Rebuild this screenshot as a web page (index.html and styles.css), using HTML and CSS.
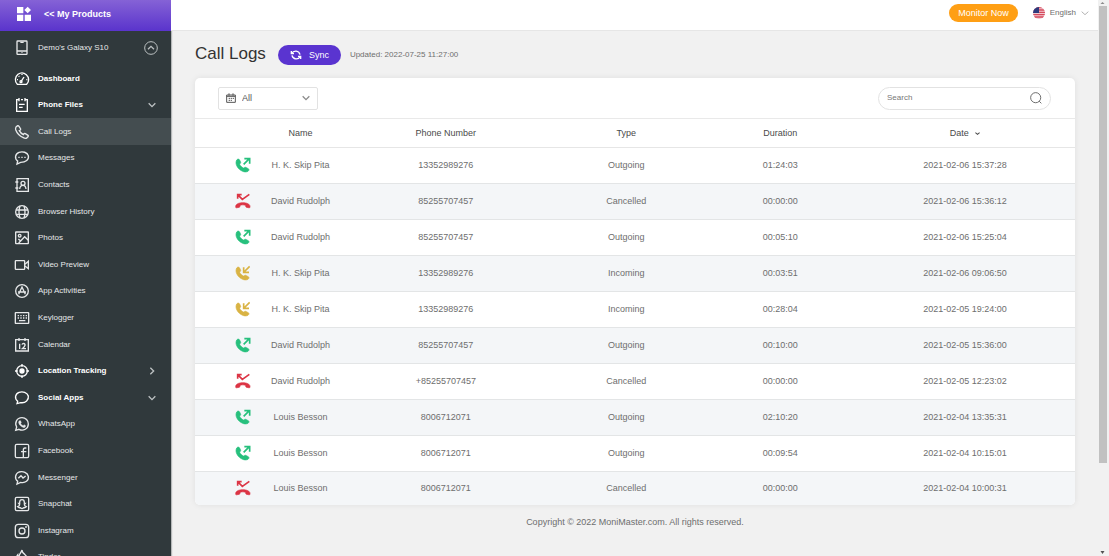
FILE: index.html
```html
<!DOCTYPE html>
<html lang="en">
<head>
<meta charset="utf-8">
<meta name="viewport" content="width=device-width, initial-scale=1">
<title>Call Logs</title>
<link rel="stylesheet" href="styles.css">
</head>
<body>
<svg class="sprite" aria-hidden="true">
  <defs>
    <path id="handset" d="M5 9C7 6 12 5 14 9L17 16C18 19 14 20 14 22C16 27 21 31 25 33C27 34 29 29 32 31L40 35C43 37 42 41 39 43C36 45 30 45 26 44C13 40 4 29 3 18C3 14 4 11 5 9Z"/>
    <symbol id="outgoing" viewBox="0 0 48 48"><use href="#handset" fill="currentColor" stroke="currentColor" stroke-width="2"/><path d="M26 22L43 5M28 5H44V20" fill="none" stroke="currentColor" stroke-width="5"/></symbol>
    <symbol id="incoming" viewBox="0 0 48 48"><use href="#handset" fill="currentColor" stroke="currentColor" stroke-width="2"/><path d="M44 4L27 21M26 7V22H42" fill="none" stroke="currentColor" stroke-width="5"/></symbol>
    <symbol id="cancelled" viewBox="0 0 48 48"><path d="M2 41C1 25 46 25 45 41C45 45 43 45 40 44L34 43C31 42 33 38 31 37C27 35 20 35 16 37C14 38 16 42 13 43L7 44C4 45 2 45 2 41Z" fill="currentColor" stroke="currentColor" stroke-width="2"/><path d="M8 5L22 19L43 4M8 17V5H20" fill="none" stroke="currentColor" stroke-width="5"/></symbol>
    <symbol id="chevron" viewBox="0 0 24 24"><path d="M2 7L12 17L22 7" fill="none" stroke="currentColor" stroke-width="4"/></symbol>
  </defs>
</svg>
<div class="app">
  <aside class="sidebar">
    <a class="brand" href="#">
      <svg class="icon brand-icon" viewBox="0 0 42 42"><path fill="#fff" d="M0 0H19V19H0ZM0 23H19V42H0ZM23 23H42V42H23ZM32 -1L42 9L32 19L22 9Z"/></svg>
      <span>&lt;&lt; My Products</span>
    </a>
    <button class="device" type="button">
      <svg class="icon" viewBox="0 0 42 42"><rect x="6" y="0" width="30" height="40" rx="2"/><path d="M6 30H36M16 4H26M21 34V36"/></svg>
      <span>Demo's Galaxy S10</span>
      <svg class="device-toggle" viewBox="0 0 42 42"><circle cx="21" cy="21" r="19"/><path d="M12 25L21 16L30 25" stroke-width="4"/></svg>
    </button>
    <nav>
      <ul class="menu">
        <li class="heading"><a href="#"><svg class="icon" viewBox="0 0 42 42"><path d="M7 37C-2 28 0 14 9 7C17 1 27 2 34 8C43 16 43 29 35 37ZM18 29L27 15M6 23H9M11 12L13 14M21 6V9M34 23H37"/><circle cx="18" cy="29" r="3"/></svg><span>Dashboard</span></a></li>
        <li class="heading"><a href="#"><svg class="icon" viewBox="0 0 42 42"><path d="M12 5H5V40H37V5H30M18 5H24M12 0V10M30 0V10M12 19H29M12 28H23"/></svg><span>Phone Files</span><svg class="arrow" viewBox="0 0 24 24"><use href="#chevron"/></svg></a></li>
        <li class="active"><a href="#"><svg class="icon" viewBox="0 0 42 42"><path d="M3 6L8 2Q10 1 12 4L17 12Q18 15 13 17Q17 25 25 29Q27 24 31 26L39 31Q41 33 39 35L36 38Q32 42 25 38Q8 30 2 14Q1 9 3 6Z"/></svg><span>Call Logs</span></a></li>
        <li><a href="#"><svg class="icon" viewBox="0 0 42 42"><path d="M6 39L8 30C-2 23 0 9 12 4C23 0 37 4 40 14C43 26 32 34 17 34Z"/><path d="M10 19H14M19 19H23M28 19H32" stroke-width="4"/></svg><span>Messages</span></a></li>
        <li><a href="#"><svg class="icon" viewBox="0 0 42 42"><path d="M6 2H40V40H6ZM1 12H10M1 30H10M14 33Q15 22 24 22Q32 22 33 33"/><circle cx="24" cy="16" r="6"/></svg><span>Contacts</span></a></li>
        <li><a href="#"><svg class="icon" viewBox="0 0 42 42"><circle cx="21" cy="21" r="19"/><path d="M3 15H39M3 28H39M15 3Q9 21 15 39M27 3Q33 21 27 39"/></svg><span>Browser History</span></a></li>
        <li><a href="#"><svg class="icon" viewBox="0 0 42 42"><rect x="2" y="3" width="38" height="35" rx="1"/><circle cx="14" cy="14" r="4"/><path d="M11 36L29 17L40 28M17 30L10 24"/></svg><span>Photos</span></a></li>
        <li><a href="#"><svg class="icon" viewBox="0 0 42 42"><rect x="1" y="8" width="28" height="26" rx="2"/><path d="M30 19L40 10V32L30 24"/></svg><span>Video Preview</span></a></li>
        <li><a href="#"><svg class="icon" viewBox="0 0 42 42"><circle cx="21" cy="21" r="19"/><path d="M11 31L21 9L31 31M9 24H33"/></svg><span>App Activities</span></a></li>
        <li><a href="#"><svg class="icon" viewBox="0 0 42 42"><rect x="1" y="5" width="40" height="32" rx="1"/><path d="M8 14H12M16 14H20M24 14H28M32 14H36M8 21H12M16 21H20M24 21H28M32 21H36M12 29H31"/></svg><span>Keylogger</span></a></li>
        <li><a href="#"><svg class="icon" viewBox="0 0 42 42"><path d="M2 5H40V39H2ZM12 0V9M30 0V9M14 17V33M21 20Q22 16 26 16Q31 17 30 22Q29 26 22 32H33"/></svg><span>Calendar</span></a></li>
        <li class="heading"><a href="#"><svg class="icon" viewBox="0 0 42 42"><circle cx="21" cy="21" r="16"/><circle cx="21" cy="21" r="6" fill="currentColor"/><path d="M21 0V8M21 34V42M0 21H8M34 21H42"/></svg><span>Location Tracking</span><svg class="arrow arrow-right" viewBox="0 0 24 24"><use href="#chevron"/></svg></a></li>
        <li class="heading"><a href="#"><svg class="icon" viewBox="0 0 42 42"><path d="M6 38L8 31C-2 23 0 9 12 4C23 0 37 4 40 15C42 27 32 37 17 35Z"/></svg><span>Social Apps</span><svg class="arrow" viewBox="0 0 24 24"><use href="#chevron"/></svg></a></li>
        <li><a href="#"><svg class="icon" viewBox="0 0 42 42"><path d="M2 40L5 30C-2 18 5 2 21 2C32 2 40 11 40 21C40 35 25 44 12 37Z"/><path fill="currentColor" stroke-width="1" d="M13 11L17 11L19 17L17 20Q20 25 25 26L27 23L32 26Q32 31 27 32Q20 31 14 24Q8 15 13 11Z"/></svg><span>WhatsApp</span></a></li>
        <li><a href="#"><svg class="icon" viewBox="0 0 42 42"><rect x="1" y="1" width="40" height="40" rx="4"/><path d="M34 12H30Q25 12 25 18V40M18 23H34"/></svg><span>Facebook</span></a></li>
        <li><a href="#"><svg class="icon" viewBox="0 0 42 42"><path d="M6 39L8 31C-2 23 0 8 12 3C24 -1 38 5 40 16C42 29 31 37 17 34ZM10 22L18 14L24 21L32 15"/></svg><span>Messenger</span></a></li>
        <li><a href="#"><svg class="icon" viewBox="0 0 42 42"><rect x="1" y="1" width="40" height="40" rx="4"/><path d="M14 16C14 5 28 5 28 16V19H31L28 23Q29 28 34 29Q31 33 26 32Q21 37 16 32Q11 33 8 29Q13 28 14 23L11 19H14Z"/></svg><span>Snapchat</span></a></li>
        <li><a href="#"><svg class="icon" viewBox="0 0 42 42"><rect x="1" y="1" width="40" height="40" rx="9"/><circle cx="21" cy="21" r="9"/><circle cx="33" cy="9" r="1"/></svg><span>Instagram</span></a></li>
        <li><a href="#"><svg class="icon" viewBox="0 0 42 42"><path d="M21 0C19 8 11 14 12 21Q8 18 8 15C0 25 5 41 21 41C38 41 40 22 30 14C24 10 21 6 21 0Z"/></svg><span>Tinder</span></a></li>
      </ul>
    </nav>
  </aside>

  <div class="page">
    <header class="topbar">
      <button class="monitor" type="button">Monitor Now</button>
      <button class="language" type="button">
        <svg class="flag" viewBox="0 0 36 36"><defs><clipPath id="round"><circle cx="18" cy="18" r="18"/></clipPath></defs><g clip-path="url(#round)"><path fill="#f0c9d0" d="M0 0H36V36H0Z"/><path stroke="#d64a5c" stroke-width="4" d="M0 2H36M0 9H36M0 16H36M0 23H36M0 30H36"/><path fill="#2e3a7c" d="M0 0H18V18H0Z"/></g></svg>
        <span>English</span>
        <svg class="small-arrow" viewBox="0 0 24 24"><path d="M2 8L12 17L22 8" fill="none" stroke="currentColor" stroke-width="2"/></svg>
      </button>
    </header>
    <main>
      <div class="title-row">
        <h1>Call Logs</h1>
        <button class="sync" type="button">
          <svg class="sync-icon" viewBox="0 0 36 30"><path d="M4 3V11H12M5 11C11 0 27 1 30 14M32 27V19H24M31 19C25 30 9 29 6 16" fill="none" stroke="currentColor" stroke-width="4"/></svg>
          <span>Sync</span>
        </button>
        <span class="updated">Updated: 2022-07-25 11:27:00</span>
      </div>
      <section class="card">
        <div class="toolbar">
          <label class="filter">
            <svg class="filter-icon" viewBox="0 0 30 30"><path d="M2 6H28V28H2ZM2 10H28M9 1V8M21 1V8" fill="none" stroke="currentColor" stroke-width="3"/><path d="M8 16H12M14 16H18M20 16H24M8 22H12M14 22H18" stroke="currentColor" stroke-width="3"/></svg>
            <select aria-label="Period"><option>All</option></select>
            <svg class="small-arrow" viewBox="0 0 24 24"><use href="#chevron"/></svg>
          </label>
          <label class="search">
            <input type="search" placeholder="Search" aria-label="Search">
            <svg class="search-icon" viewBox="0 0 38 38"><circle cx="18" cy="18" r="16"/><path d="M29 29L36 36"/></svg>
          </label>
        </div>
        <table>
          <colgroup><col class="c-icon"><col class="c-name"><col class="c-phone"><col class="c-type"><col class="c-duration"><col class="c-date"></colgroup>
          <thead><tr><th></th><th>Name</th><th>Phone Number</th><th>Type</th><th>Duration</th><th>Date <svg class="sort" viewBox="0 0 24 24"><path d="M2 8L12 16L22 8" fill="none" stroke="currentColor" stroke-width="5"/></svg></th></tr></thead>
          <tbody>
            <tr><td><svg class="call outgoing"><use href="#outgoing"/></svg></td><td>H. K. Skip Pita</td><td>13352989276</td><td>Outgoing</td><td>01:24:03</td><td>2021-02-06 15:37:28</td></tr>
            <tr><td><svg class="call cancelled"><use href="#cancelled"/></svg></td><td>David Rudolph</td><td>85255707457</td><td>Cancelled</td><td>00:00:00</td><td>2021-02-06 15:36:12</td></tr>
            <tr><td><svg class="call outgoing"><use href="#outgoing"/></svg></td><td>David Rudolph</td><td>85255707457</td><td>Outgoing</td><td>00:05:10</td><td>2021-02-06 15:25:04</td></tr>
            <tr><td><svg class="call incoming"><use href="#incoming"/></svg></td><td>H. K. Skip Pita</td><td>13352989276</td><td>Incoming</td><td>00:03:51</td><td>2021-02-06 09:06:50</td></tr>
            <tr><td><svg class="call incoming"><use href="#incoming"/></svg></td><td>H. K. Skip Pita</td><td>13352989276</td><td>Incoming</td><td>00:28:04</td><td>2021-02-05 19:24:00</td></tr>
            <tr><td><svg class="call outgoing"><use href="#outgoing"/></svg></td><td>David Rudolph</td><td>85255707457</td><td>Outgoing</td><td>00:10:00</td><td>2021-02-05 15:36:00</td></tr>
            <tr><td><svg class="call cancelled"><use href="#cancelled"/></svg></td><td>David Rudolph</td><td>+85255707457</td><td>Cancelled</td><td>00:00:00</td><td>2021-02-05 12:23:02</td></tr>
            <tr><td><svg class="call outgoing"><use href="#outgoing"/></svg></td><td>Louis Besson</td><td>8006712071</td><td>Outgoing</td><td>02:10:20</td><td>2021-02-04 13:35:31</td></tr>
            <tr><td><svg class="call outgoing"><use href="#outgoing"/></svg></td><td>Louis Besson</td><td>8006712071</td><td>Outgoing</td><td>00:09:54</td><td>2021-02-04 10:15:01</td></tr>
            <tr><td><svg class="call cancelled"><use href="#cancelled"/></svg></td><td>Louis Besson</td><td>8006712071</td><td>Cancelled</td><td>00:00:00</td><td>2021-02-04 10:00:31</td></tr>
          </tbody>
        </table>
      </section>
      <footer>Copyright © 2022 MoniMaster.com. All rights reserved.</footer>
    </main>
  </div>

  <div class="scrollbar" aria-hidden="true">
    <svg viewBox="0 0 8 6"><path d="M2 4L4 2L6 4Z" fill="#8a8a8a"/></svg>
    <div class="track"><div class="thumb"></div></div>
    <svg viewBox="0 0 8 6"><path d="M2 1H6L4 4Z" fill="#505050"/></svg>
  </div>
</div>
</body>
</html>
```
FILE: styles.css
```css
* { box-sizing: border-box; }

body {
  margin: 0;
  background: #f1f1f1;
  font: 9px/12px "Liberation Sans", Arial, sans-serif;
  color: #6e6e6e;
}

button, input, select { font: inherit; color: inherit; }
button { border: 0; padding: 0; background: none; cursor: pointer; }
a { color: inherit; text-decoration: none; }
svg { display: block; flex: none; overflow: visible; }

.sprite { position: absolute; width: 0; height: 0; }

.app {
  display: grid;
  grid-template-columns: 171px minmax(0, 1fr) 11px;
  height: 100vh;
  overflow: hidden;
}

/* Sidebar */
.sidebar {
  overflow: hidden;
  min-height: 0;
  background: #30393c;
  color: #e6e8e9;
  font-size: 8px;
  box-shadow: 1px 0 1px #b5b8b9;
}

.brand {
  display: flex;
  align-items: center;
  gap: 13px;
  height: 31px;
  padding: 0 17px 4px;
  background: linear-gradient(#8562d6, #5a34cc);
  color: #fff;
  font-size: 9px;
  font-weight: bold;
}

.icon {
  width: 14px;
  height: 14px;
  fill: none;
  stroke: currentColor;
  stroke-width: 4;
}
.brand-icon { stroke: none; }

.device {
  display: flex;
  align-items: center;
  gap: 9px;
  width: 100%;
  height: 34px;
  padding: 0 13px 0 15px;
  text-align: left;
}
.device span, .menu span { flex: 1; }
.device-toggle {
  width: 14px;
  height: 14px;
  fill: none;
  stroke: #bcc1c2;
  stroke-width: 3;
}

.menu { margin: 0; padding: 0; list-style: none; }
.menu a {
  display: flex;
  align-items: center;
  gap: 9px;
  height: 27px;
  padding: 0 15px;
}
.menu li:nth-child(5n + 2) a,
.menu li:nth-child(5n + 4) a { height: 26px; }
.heading { color: #fff; font-weight: bold; }
.active { background: #444d50; }
.arrow { width: 8px; height: 8px; color: #bcc1c2; }
.arrow-right { transform: rotate(-90deg); }

/* Top bar */
.page { min-width: 0; overflow: hidden; }
.topbar {
  display: flex;
  align-items: center;
  justify-content: flex-end;
  gap: 15px;
  height: 31px;
  padding: 0 9px 4px 0;
  border-bottom: 1px solid #e6e6e6;
  background: #fff;
}
.monitor {
  height: 18px;
  padding: 0 9px;
  border-radius: 9px;
  background: #ff9f14;
  color: #fff;
  font-size: 9px;
}
.language { display: flex; align-items: center; gap: 5px; font-size: 8px; }
.flag { width: 12px; height: 12px; }
.small-arrow { width: 8px; height: 8px; color: #8c8c8c; pointer-events: none; }

/* Content */
main { padding: 14px 23px 0 24px; }
.title-row { display: flex; align-items: center; height: 20px; }
h1 {
  margin: 0 12px 2px 0;
  color: #333;
  font-size: 17px;
  font-weight: normal;
  line-height: 20px;
}
.sync {
  display: flex;
  align-items: center;
  gap: 7px;
  height: 20px;
  margin-right: 9px;
  padding: 0 12px;
  border-radius: 10px;
  background: #5a34d0;
  color: #fff;
}
.sync-icon { width: 12px; height: 10px; }
.updated { font-size: 8px; }

.card {
  margin-top: 13px;
  overflow: hidden;
  border-radius: 5px;
  background: #fff;
  box-shadow: 0 0 6px rgba(0, 0, 0, 0.08);
}
.toolbar {
  display: flex;
  align-items: center;
  justify-content: space-between;
  height: 41px;
  padding: 0 24px 0 23px;
  border-bottom: 1px solid #e9e9e9;
}
.filter, .search {
  display: flex;
  align-items: center;
  height: 23px;
  padding: 0 7px;
  border: 1px solid #e2e2e2;
}
.filter { gap: 6px; width: 100px; border-radius: 2px; color: #555; }
.filter-icon { width: 10px; height: 10px; }
.filter select {
  flex: 1;
  min-width: 0;
  padding: 0;
  border: 0;
  background: none;
  appearance: none;
  outline: none;
}
.search { width: 173px; border-radius: 12px; padding: 0 8px; }
.search input {
  flex: 1;
  min-width: 0;
  padding: 0;
  border: 0;
  background: none;
  appearance: none;
  outline: none;
  font-size: 8px;
}
.search input::placeholder { color: #777; }
.search-icon { width: 12px; height: 12px; fill: none; stroke: #666; stroke-width: 3; }

/* Table */
table { width: 100%; border-collapse: collapse; table-layout: fixed; }
.c-icon { width: 7%; }
.c-name { width: 10%; }
.c-phone { width: 23%; }
.c-type { width: 18%; }
.c-duration { width: 17%; }
.c-date { width: 25%; }
th, td { padding: 0; text-align: center; white-space: nowrap; }
th {
  height: 28px;
  border-bottom: 1px solid #e6e6e6;
  color: #4a4a4a;
  font-weight: normal;
}
td { height: 36px; border-bottom: 1px solid #e3e5e6; }
tbody tr:nth-child(even) { background: #f4f6f8; }
tbody tr:last-child td { height: 34px; border-bottom: 0; }
.call { width: 16px; height: 16px; margin-left: 40px; }
.outgoing { color: #27c07d; }
.incoming { color: #d9b344; }
.cancelled { color: #dc3545; }
.sort { display: inline-block; width: 5px; height: 5px; margin-left: 4px; vertical-align: middle; }

footer { padding: 11px 0; text-align: center; }

/* Scrollbar */
.scrollbar {
  display: flex;
  flex-direction: column;
  padding-right: 2px;
  background: #f1f1f1;
}
.scrollbar svg { width: 9px; height: 6px; }
.track { flex: 1; padding-left: 1px; }
.thumb { height: 84%; background: #c1c1c1; }
```
